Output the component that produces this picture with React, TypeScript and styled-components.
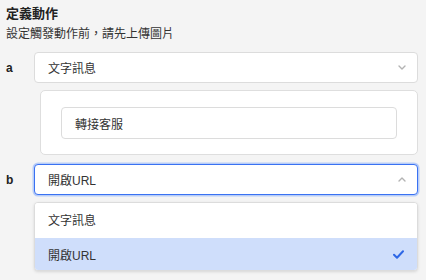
import React from "react";
import styled, { createGlobalStyle } from "styled-components";

const GlobalStyle = createGlobalStyle`
  html, body {
    margin: 0;
    padding: 0;
    background: #f4f4f4;
  }
  body {
    font-family: "Liberation Sans", "Noto Sans CJK TC", sans-serif;
    color: #333333;
  }
`;

interface Option {
  id: string;
  label: string;
}

const OPTIONS: Option[] = [
  { id: "text", label: "文字訊息" },
  { id: "url", label: "開啟URL" },
];

const ChevronDown = () => (
  <svg width="8" height="5" viewBox="0 0 8 5" fill="none">
    <path d="M1 1l3 3 3-3" stroke="#b3b3b3" strokeWidth="1.4" strokeLinecap="round" strokeLinejoin="round" />
  </svg>
);

const ChevronUp = () => (
  <svg width="8" height="5" viewBox="0 0 8 5" fill="none">
    <path d="M1 4l3-3 3 3" stroke="#b3b3b3" strokeWidth="1.4" strokeLinecap="round" strokeLinejoin="round" />
  </svg>
);

const Check = () => (
  <svg width="11" height="9" viewBox="0 0 11 9" fill="none">
    <path d="M1 4.8l3 3L10 1.3" stroke="#2f68e6" strokeWidth="2" strokeLinecap="round" strokeLinejoin="round" />
  </svg>
);

const App = () => {
  return (
    <Container>
      <GlobalStyle />
      <Title>定義動作</Title>
      <Subtitle>設定觸發動作前，請先上傳圖片</Subtitle>

      <Row>
        <Label>a</Label>
        <Select>
          <span>文字訊息</span>
          <ChevronDown />
        </Select>
      </Row>

      <Panel>
        <Input>轉接客服</Input>
      </Panel>

      <Row $top={9}>
        <Label>b</Label>
        <Select $focused>
          <span>開啟URL</span>
          <ChevronUp />
        </Select>
      </Row>

      <Menu>
        {OPTIONS.map((opt) => (
          <MenuItem key={opt.id} $selected={opt.id === "url"}>
            <span>{opt.label}</span>
            {opt.id === "url" && <Check />}
          </MenuItem>
        ))}
      </Menu>
    </Container>
  );
};

const Container = styled.div`
  padding: 5px 8px 0 6px;
  width: 426px;
  height: 280px;
  box-sizing: border-box;
  overflow: hidden;
`;

const Title = styled.div`
  font-size: 13px;
  font-weight: bold;
  line-height: 18px;
  color: #222222;
`;

const Subtitle = styled.div`
  font-size: 12px;
  line-height: 20px;
  margin-top: 1px;
  color: #333333;
`;

const Row = styled.div<{ $top?: number }>`
  display: flex;
  align-items: center;
  margin-top: ${(p) => p.$top ?? 8}px;
`;

const Label = styled.div`
  width: 28px;
  flex-shrink: 0;
  font-size: 12px;
  font-weight: bold;
  color: #222222;
`;

const Select = styled.div<{ $focused?: boolean }>`
  flex: 1;
  height: 31px;
  box-sizing: border-box;
  display: flex;
  align-items: center;
  justify-content: space-between;
  padding: 0 11px 0 13px;
  background: #ffffff;
  border: 1px solid ${(p) => (p.$focused ? "#3a72f2" : "#dcdcdc")};
  border-radius: 4px;
  font-size: 12px;
  color: #333333;
  box-shadow: ${(p) => (p.$focused ? "0 0 0 1.5px #b8cdf8" : "none")};
`;

const Panel = styled.div`
  margin: 7px 0 0 34px;
  height: 65px;
  box-sizing: border-box;
  padding: 16px 20px 0 20px;
  background: #ffffff;
  border: 1px solid #dedede;
  border-radius: 5px;
`;

const Input = styled.div`
  height: 32px;
  box-sizing: border-box;
  display: flex;
  align-items: center;
  padding: 0 13px;
  border: 1px solid #dcdcdc;
  border-radius: 4px;
  font-size: 12px;
  color: #333333;
`;

const Menu = styled.div`
  margin: 7px 0 0 28px;
  display: flex;
  flex-direction: column;
  gap: 3px;
  background: #ffffff;
  border: 1px solid #dcdcdc;
  border-radius: 4px;
  box-shadow: 0 1px 3px rgba(0, 0, 0, 0.12);
  overflow: hidden;
`;

const MenuItem = styled.div<{ $selected?: boolean }>`
  height: 32px;
  display: flex;
  align-items: center;
  justify-content: space-between;
  padding: 0 13px;
  font-size: 12px;
  color: #333333;
  background: ${(p) => (p.$selected ? "#cfdefb" : "#ffffff")};
`;

export default App;
